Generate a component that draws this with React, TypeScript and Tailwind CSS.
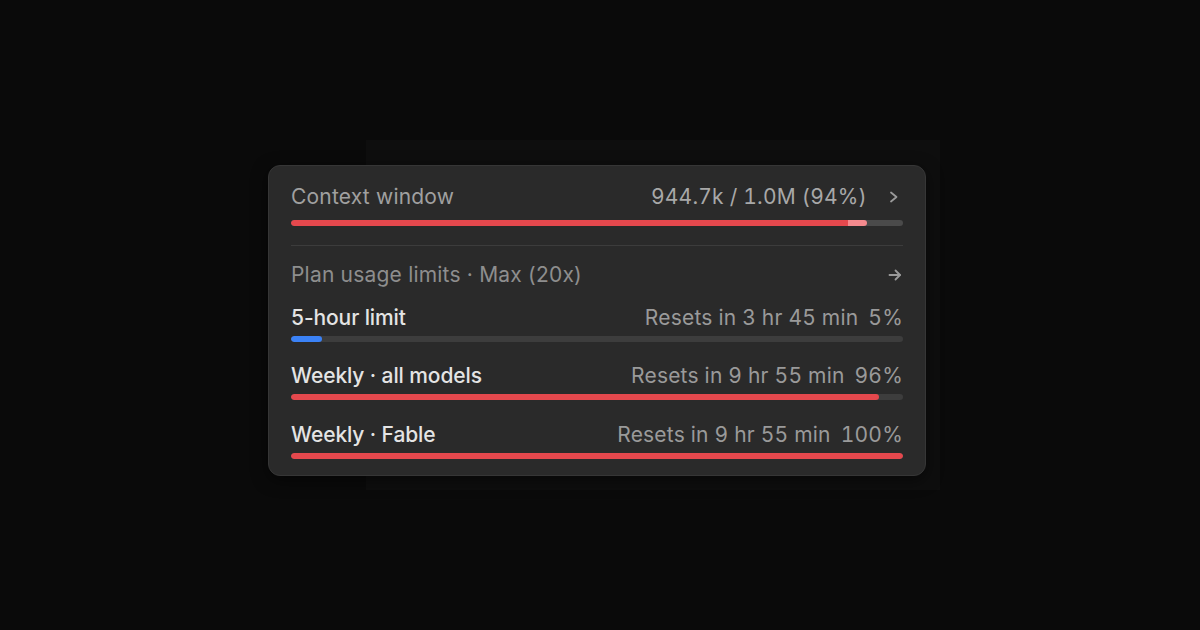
import React from "react";

function ChevronRight() {
  return (
    <svg width="14" height="16" viewBox="0 0 14 16" fill="none" stroke="currentColor" strokeWidth="1.8" strokeLinecap="round" strokeLinejoin="round">
      <path d="M4 3.5 L9.5 8 L4 12.5" />
    </svg>
  );
}

function ArrowRight() {
  return (
    <svg width="16" height="16" viewBox="0 0 16 16" fill="none" stroke="currentColor" strokeWidth="1.8" strokeLinecap="round" strokeLinejoin="round">
      <path d="M2.5 8 H13" />
      <path d="M8.5 3.5 L13 8 L8.5 12.5" />
    </svg>
  );
}

function Bar({ pct, color, track }: { pct: number; color: string; track: string }) {
  return (
    <div className={`h-[6px] w-full rounded-full ${track} overflow-hidden`}>
      <div className={`h-full rounded-full ${color}`} style={{ width: `${pct}%` }} />
    </div>
  );
}

function LimitRow({ label, resets, pct, color, mt }: { label: string; resets: string; pct: number; color: string; mt: string }) {
  return (
    <div className={mt}>
      <div className="flex h-[24px] items-center justify-between">
        <span className="font-medium tracking-[-0.1px] text-[#e4e4e4]">{label}</span>
        <span className="tabular-nums text-[#9a9a9a]">
          {resets}
          <span className="ml-[10px]">{pct}%</span>
        </span>
      </div>
      <div className="mt-[6px]">
        <Bar pct={pct} color={color} track="bg-[#3d3d3d]" />
      </div>
    </div>
  );
}

export default function App() {
  return (
    <div
      className="relative flex h-[630px] w-[1200px] items-start justify-start overflow-hidden bg-[#0a0a0a]"
      style={{ fontFamily: "Inter, 'Open Sans', sans-serif" }}
    >
      <div className="absolute left-[366px] top-[140px] h-[350px] w-[574px] bg-[#0e0e0e]" />
      <div className="relative ml-[268px] mt-[165px] w-[658px] rounded-[12px] border border-[#363636] bg-[#2a2a2a] px-[22px] pb-[16px] pt-[19px] text-[21px] leading-[24px] tracking-[0.2px] shadow-[0_4px_16px_rgba(0,0,0,0.5)]">
        <div className="flex h-[24px] items-center justify-between">
          <span className="text-[#a0a0a0]">Context window</span>
          <div className="flex items-center text-[#a8a8a8]">
            <span className="tabular-nums">944.7k / 1.0M (94%)</span>
            <span className="ml-[20px] mr-[2px] flex text-[#9a9a9a]">
              <ChevronRight />
            </span>
          </div>
        </div>
        <div className="mt-[11px] flex h-[6px] w-full overflow-hidden rounded-full bg-[#4a4a4a]">
          <div className="h-full rounded-l-full bg-[#e5484d]" style={{ width: "91%" }} />
          <div className="h-full rounded-r-full bg-[#f48a8e]" style={{ width: "3.2%" }} />
        </div>
        <div className="mt-[19px] h-px w-full bg-[#3c3c3c]" />
        <div className="mt-[17px] flex h-[24px] items-center justify-between">
          <span className="text-[#8e8e8e]">Plan usage limits · Max (20x)</span>
          <span className="flex text-[#9a9a9a]">
            <ArrowRight />
          </span>
        </div>
        <LimitRow label="5-hour limit" resets="Resets in 3 hr 45 min" pct={5} color="bg-[#3b82f6]" mt="mt-[19px]" />
        <LimitRow label="Weekly · all models" resets="Resets in 9 hr 55 min" pct={96} color="bg-[#e5484d]" mt="mt-[22px]" />
        <LimitRow label="Weekly · Fable" resets="Resets in 9 hr 55 min" pct={100} color="bg-[#e5484d]" mt="mt-[23px]" />
      </div>
    </div>
  );
}
